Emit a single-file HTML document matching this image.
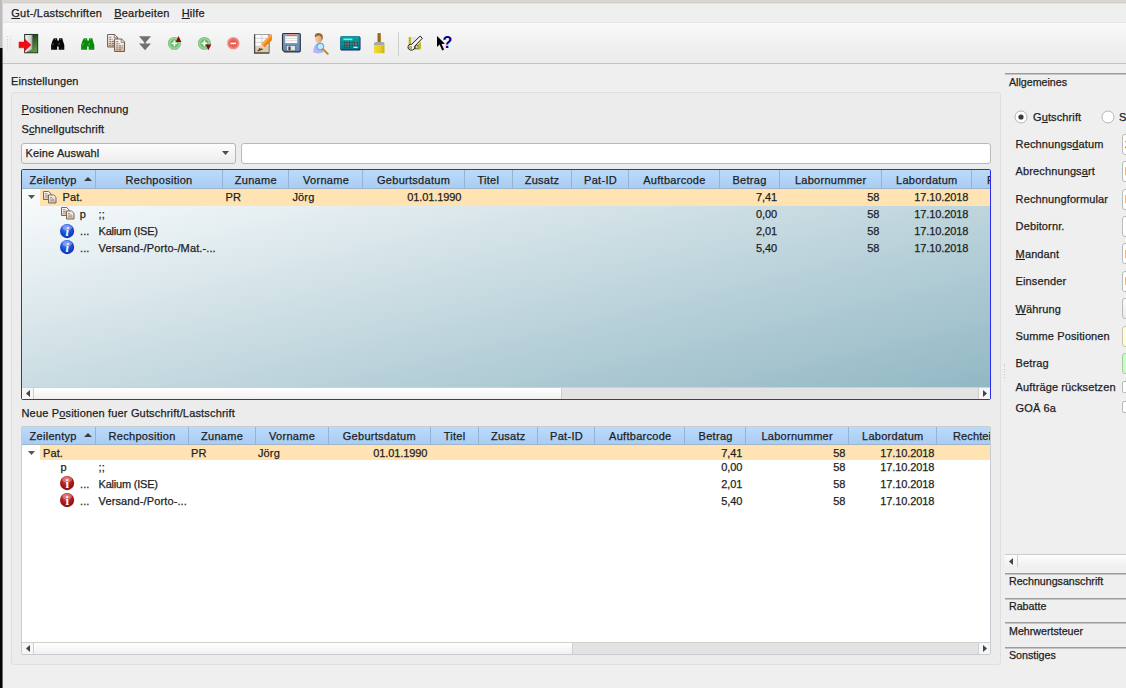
<!DOCTYPE html><html lang="de"><head><meta charset="utf-8"><title>Gut-/Lastschriften</title><style>
html,body{margin:0;padding:0;}
body{width:1126px;height:688px;overflow:hidden;background:#efefef;position:relative;font-family:"Liberation Sans",sans-serif;font-size:11px;color:#232323;}
.t{position:absolute;white-space:pre;line-height:12px;font-size:11px;letter-spacing:0.12px;color:#1e1e1e;-webkit-text-stroke:0.25px #1e1e1e;}
.t.n{letter-spacing:-0.1px;}
.t.h{letter-spacing:0.28px;}
.t.m{letter-spacing:0.22px;}
.t.k{letter-spacing:-0.22px;}
.t.a{font-size:10.67px;letter-spacing:0;color:#1c1c1c;}
u{text-decoration:underline;text-underline-offset:1px;text-decoration-thickness:1px;}
.abs{position:absolute;}
.field{position:absolute;box-sizing:border-box;border:1px solid #b9b9b9;border-radius:3px;background:#fff;}
.hdr{position:absolute;box-sizing:border-box;background:linear-gradient(#bbdbfb,#a9ccf2);border-bottom:1px solid #a0b4c8;}
.sep{position:absolute;width:1px;background:#96b4d6;}
.sel{position:absolute;background:#ffe3b3;}
.tabline{position:absolute;left:1005px;width:121px;height:2px;background:linear-gradient(#9c9c9c 0,#9c9c9c 50%,#c4c4c4 50%,#c4c4c4 100%);}
</style></head><body><div class="" style="position:absolute;left:0px;top:0px;width:1126px;height:3px;background:#d9d6d2;"></div><div class="" style="position:absolute;left:0px;top:2px;width:1126px;height:1px;background:#d2cfcb;"></div><div class="" style="position:absolute;left:0px;top:3px;width:1126px;height:1px;background:#e4e3e1;"></div><div class="" style="position:absolute;left:0px;top:0px;width:2px;height:48px;background:#bcbcbc;"></div><div class="" style="position:absolute;left:2px;top:0px;width:1px;height:48px;background:#d4d4d4;"></div><div class="" style="position:absolute;left:0px;top:48px;width:2px;height:640px;background:#060606;"></div><div class="" style="position:absolute;left:2px;top:48px;width:1px;height:640px;background:#6c6c6c;"></div><div class="t m" style="top:7.20px;left:11.30px;"><u>G</u>ut-/Lastschriften</div><div class="t m" style="top:7.20px;left:114.20px;"><u>B</u>earbeiten</div><div class="t m" style="top:7.20px;left:181.70px;"><u>H</u>ilfe</div><div class="" style="position:absolute;left:3px;top:22px;width:1123px;height:1px;background:#e6e6e6;"></div><div class="" style="position:absolute;left:3px;top:23px;width:1123px;height:40px;background:linear-gradient(#fafafa,#f2f2f2 40%,#ececec);"></div><div class="" style="position:absolute;left:3px;top:63px;width:1123px;height:1px;background:#c3c3c3;"></div><div class="abs" style="left:7px;top:36.0px;width:1px;height:1px;background:#cfcfcf"></div><div class="abs" style="left:10px;top:36.0px;width:1px;height:1px;background:#dcdcdc"></div><div class="abs" style="left:7px;top:38.5px;width:1px;height:1px;background:#cfcfcf"></div><div class="abs" style="left:10px;top:38.5px;width:1px;height:1px;background:#dcdcdc"></div><div class="abs" style="left:7px;top:41.0px;width:1px;height:1px;background:#cfcfcf"></div><div class="abs" style="left:10px;top:41.0px;width:1px;height:1px;background:#dcdcdc"></div><div class="abs" style="left:7px;top:43.5px;width:1px;height:1px;background:#cfcfcf"></div><div class="abs" style="left:10px;top:43.5px;width:1px;height:1px;background:#dcdcdc"></div><div class="abs" style="left:7px;top:46.0px;width:1px;height:1px;background:#cfcfcf"></div><div class="abs" style="left:10px;top:46.0px;width:1px;height:1px;background:#dcdcdc"></div><div class="abs" style="left:7px;top:48.5px;width:1px;height:1px;background:#cfcfcf"></div><div class="abs" style="left:10px;top:48.5px;width:1px;height:1px;background:#dcdcdc"></div><svg width="0" height="0" style="position:absolute"><defs>
<linearGradient id="gdoor" x1="0" y1="0" x2="0.4" y2="1"><stop offset="0" stop-color="#12300e"/><stop offset="0.45" stop-color="#2c5a22"/><stop offset="1" stop-color="#5c9442"/></linearGradient>
<linearGradient id="gleaf" x1="0" y1="0" x2="1" y2="0"><stop offset="0" stop-color="#f4f4f4"/><stop offset="0.7" stop-color="#cfcfcf"/><stop offset="1" stop-color="#9a9a9a"/></linearGradient>
<linearGradient id="gdoc" x1="0" y1="0" x2="0.3" y2="1"><stop offset="0" stop-color="#ffffff"/><stop offset="0.55" stop-color="#f6ece4"/><stop offset="1" stop-color="#e6bf9c"/></linearGradient>
<radialGradient id="ggreen" cx="0.5" cy="0.5" r="0.5"><stop offset="0" stop-color="#4cae50"/><stop offset="0.55" stop-color="#62b866"/><stop offset="0.72" stop-color="#a4d6a5"/><stop offset="0.9" stop-color="#86c688"/><stop offset="1" stop-color="#66b06a"/></radialGradient>
<radialGradient id="gred" cx="0.5" cy="0.5" r="0.5"><stop offset="0" stop-color="#e2493f"/><stop offset="0.6" stop-color="#ea665c"/><stop offset="1" stop-color="#f2a59e"/></radialGradient>
<linearGradient id="gfloppy" x1="0" y1="0" x2="0" y2="1"><stop offset="0" stop-color="#7ba3c9"/><stop offset="1" stop-color="#5f87b0"/></linearGradient>
<linearGradient id="gpencil" x1="0" y1="0" x2="1" y2="1"><stop offset="0" stop-color="#ffb050"/><stop offset="0.5" stop-color="#ff8a10"/><stop offset="1" stop-color="#e06800"/></linearGradient>
<linearGradient id="gbrist" x1="0" y1="0" x2="1" y2="0"><stop offset="0" stop-color="#f0dc38"/><stop offset="0.6" stop-color="#e6cc20"/><stop offset="1" stop-color="#cdb218"/></linearGradient>
<radialGradient id="gblue" cx="0.45" cy="0.3" r="0.75"><stop offset="0" stop-color="#5c8cff"/><stop offset="0.5" stop-color="#1d4fe0"/><stop offset="1" stop-color="#0a2aa8"/></radialGradient>
<radialGradient id="gdred" cx="0.45" cy="0.3" r="0.75"><stop offset="0" stop-color="#e05a5a"/><stop offset="0.5" stop-color="#b01c1c"/><stop offset="1" stop-color="#7a0c0c"/></radialGradient>
<linearGradient id="gteal" x1="0" y1="0" x2="0" y2="1"><stop offset="0" stop-color="#10a0a0"/><stop offset="1" stop-color="#007e86"/></linearGradient>
<linearGradient id="gface" x1="0" y1="0" x2="1" y2="0"><stop offset="0" stop-color="#f6cfae"/><stop offset="1" stop-color="#e0a07a"/></linearGradient>
</defs></svg><svg class="abs" style="left:18.8px;top:33.8px;overflow:visible" width="20" height="19.5" viewBox="0 0 20 19.5" ><rect x="5.7" y="0.4" width="13" height="18.4" fill="url(#gdoor)" stroke="#1c2a1c" stroke-width="0.9"/><path d="M6.2 0.9h7.3v14.2l-7.3 3.4z" fill="url(#gleaf)"/><path d="M13.5 0.9v14.2" stroke="#6a6a6a" stroke-width="0.6"/><path d="M0 8h5.6V4.9l6.4 6l-6.4 6V13.8H0z" fill="#f20c12" stroke="#d80008" stroke-width="0.5"/></svg><svg class="abs" style="left:50.9px;top:38.1px;overflow:visible" width="13.4" height="12" viewBox="0 0 13.4 12" ><path d="M2.9 0.2h3.1l0.5 2.6h1.2l0.5-2.6h3.1l0.7 2.8l1.3 4v4.8h-5.6v-3.3h-1.6v3.3H0.1v-4.8l1.3-4z" fill="#060606"/><path d="M3.9 1.2h1.1M8.8 1.2h1.1" stroke="#fff" stroke-width="0.9" opacity="0.55"/><path d="M2.3 5.2l-0.5 2.2M8.2 5.2l-0.3 2" stroke="#fff" stroke-width="0.9" opacity="0.4"/><path d="M1.6 10.2h0.8M10.4 10.2h0.8" stroke="#fff" stroke-width="0.8" opacity="0.35"/></svg><svg class="abs" style="left:80.6px;top:38.1px;overflow:visible" width="13.4" height="12" viewBox="0 0 13.4 12" ><path d="M2.9 0.2h3.1l0.5 2.6h1.2l0.5-2.6h3.1l0.7 2.8l1.3 4v4.8h-5.6v-3.3h-1.6v3.3H0.1v-4.8l1.3-4z" fill="#0a8a0a"/><path d="M3.9 1.2h1.1M8.8 1.2h1.1" stroke="#fff" stroke-width="0.9" opacity="0.55"/><path d="M2.3 5.2l-0.5 2.2M8.2 5.2l-0.3 2" stroke="#fff" stroke-width="0.9" opacity="0.4"/><path d="M1.6 10.2h0.8M10.4 10.2h0.8" stroke="#fff" stroke-width="0.8" opacity="0.35"/></svg><svg class="abs" style="left:107px;top:34.2px;overflow:visible" width="18.5" height="19" viewBox="0 0 18.5 19" ><g transform="translate(0,0)"><path d="M0.6 1.2q0-0.7 0.7-0.7h6l3.2 3.2v8.6q0 0.7-0.7 0.7h-8.5q-0.7 0-0.7-0.7z" fill="url(#gdoc)" stroke="#6f6056" stroke-width="1.1"/><path d="M7.2 0.7v3.1h3.1" fill="#fff" stroke="#6f6056" stroke-width="0.8"/><path d="M2.2 3.2h2.8M2.2 5.3h3.4M2.2 7.4h6.6M2.2 9.4h6.6M2.2 11.3h5" stroke="#6b625c" stroke-width="0.9" stroke-dasharray="2.2 0.6"/></g><g transform="translate(7,4.5)"><path d="M0.6 1.2q0-0.7 0.7-0.7h6l3.2 3.2v8.6q0 0.7-0.7 0.7h-8.5q-0.7 0-0.7-0.7z" fill="url(#gdoc)" stroke="#6f6056" stroke-width="1.1"/><path d="M7.2 0.7v3.1h3.1" fill="#fff" stroke="#6f6056" stroke-width="0.8"/><path d="M2.2 3.2h2.8M2.2 5.3h3.4M2.2 7.4h6.6M2.2 9.4h6.6M2.2 11.3h5" stroke="#6b625c" stroke-width="0.9" stroke-dasharray="2.2 0.6"/></g></svg><svg class="abs" style="left:139px;top:36px;overflow:visible" width="12" height="14.5" viewBox="0 0 12 14.5" ><path d="M0 0.2h12L6 7.2z M0 7.4h12L6 14.3z" fill="#737073"/><path d="M5.4 6h1.2v2H5.4z" fill="#737073"/></svg><svg class="abs" style="left:168.2px;top:37px;overflow:visible" width="12.8" height="12.8" viewBox="0 0 12.8 12.8" ><circle cx="6.4" cy="6.4" r="6.4" fill="url(#ggreen)"/><path d="M6.4 3.6v5.6M3.6 6.4h5.6" stroke="#fff" stroke-width="1.7"/><path d="M10.5 -1.1L13.4 5.1H7.7z" fill="#8c0a0e"/></svg><svg class="abs" style="left:197.6px;top:37px;overflow:visible" width="12.8" height="12.8" viewBox="0 0 12.8 12.8" ><circle cx="6.4" cy="6.4" r="6.4" fill="url(#ggreen)"/><path d="M6.4 3.6v5.6M3.6 6.4h5.6" stroke="#fff" stroke-width="1.7"/><path d="M7.4 7.4h5.9L10.4 13.3z" fill="#8c0a0e"/></svg><svg class="abs" style="left:227px;top:37px;overflow:visible" width="12.6" height="12.6" viewBox="0 0 12.6 12.6" ><circle cx="6.3" cy="6.3" r="6.3" fill="url(#gred)"/><path d="M3.6 6.4h5.4" stroke="#fff" stroke-width="1.6"/></svg><svg class="abs" style="left:254.2px;top:33.5px;overflow:visible" width="19" height="19.5" viewBox="0 0 19 19.5" ><rect x="0.5" y="0.4" width="14.6" height="18.4" fill="#fbfbfb" stroke="#8c8c8c" stroke-width="0.8"/><path d="M0.5 12.2h14.6v6.6H0.5z" fill="#e2cda8"/><path d="M0.6 4.4h14.4M0.6 8.3h14.4M0.6 12.2h14.4M0.6 15.6h14.4M7.8 0.5v18" stroke="#c9c9c9" stroke-width="0.8"/><path d="M0.6 0.4v18.6h14.6" fill="none" stroke="#4a4a4a" stroke-width="1.3"/><path d="M15.1 0.4v18.4" stroke="#777" stroke-width="0.9"/><path d="M17.9 0l-1.4 0.6l-9.3 9.4l3.4 3.6L17.9 6.2z" fill="url(#gpencil)"/><path d="M17.9 0.4l-9.6 10.4" stroke="#ffd09a" stroke-width="0.8" fill="none"/><path d="M7.2 10l-2.6 5.8l6-2.2z" fill="#f6cdb0"/><path d="M4.6 15.8l2.2-0.8l-1.3-1.3z" fill="#2e2418"/><path d="M3.6 16.9l5-2" stroke="#4a3c28" stroke-width="1.3"/></svg><svg class="abs" style="left:282px;top:33.2px;overflow:visible" width="19" height="19.5" viewBox="0 0 19 19.5" ><path d="M1.6 0.5h15.6q1.1 0 1.1 1.1v16.2q0 1.1-1.1 1.1H2.6L0.5 16.8V1.6q0-1.1 1.1-1.1z" fill="url(#gfloppy)" stroke="#28313c" stroke-width="1.1"/><rect x="3.2" y="1.5" width="12" height="8.6" fill="#fcfcfc"/><rect x="3.2" y="1.5" width="12" height="1.7" fill="#e26a6a"/><path d="M3.2 5.4h12M3.2 7.6h12" stroke="#cfcfcf" stroke-width="0.7"/><rect x="4.4" y="12.6" width="9" height="5.2" fill="#e4e4e4" stroke="#48505a" stroke-width="0.5"/><rect x="6.4" y="13.5" width="2.2" height="3.6" fill="#3a3a3a"/></svg><svg class="abs" style="left:313px;top:32.6px;overflow:visible" width="16" height="21.5" viewBox="0 0 16 21.5" ><path d="M0.2 19.6q-0.3-7.8 5-9.6q5.3 1.6 5 9.6q-5 1.6-10 0z" fill="#b4b6f6"/><ellipse cx="5.6" cy="5.4" rx="3.5" ry="4.5" fill="url(#gface)"/><path d="M1.8 4.4q-0.6-4.4 4-4.4q4.6 0.2 4 5.2q-0.6 2-1.2 2.6q0.4-3.4-1.6-5.2q-3 0.2-5.2 1.8z" fill="#9a6826"/><circle cx="7.3" cy="13.6" r="3.3" fill="#cfeaff" stroke="#3bb4e6" stroke-width="1.2" opacity="0.95"/><path d="M9.9 16.3l4.8 4.4" stroke="#c98a1c" stroke-width="2" stroke-linecap="round"/></svg><svg class="abs" style="left:340.2px;top:35.6px;overflow:visible" width="21" height="15" viewBox="0 0 21 15" ><rect x="0.3" y="0.3" width="20.2" height="14.2" rx="1.6" fill="#12186c"/><rect x="0.3" y="0.3" width="19.4" height="13.2" rx="1.4" fill="url(#gteal)"/><rect x="3.4" y="2.5" width="9" height="1.7" fill="#66f2f2"/><rect x="3.1" y="5.6" width="1.5" height="1.5" fill="#2a2a34"/><rect x="3.1" y="5.6" width="0.8" height="0.8" fill="#b8b8b8"/><rect x="5.7" y="5.6" width="1.5" height="1.5" fill="#2a2a34"/><rect x="5.7" y="5.6" width="0.8" height="0.8" fill="#b8b8b8"/><rect x="8.3" y="5.6" width="1.5" height="1.5" fill="#2a2a34"/><rect x="8.3" y="5.6" width="0.8" height="0.8" fill="#b8b8b8"/><rect x="10.9" y="5.6" width="1.5" height="1.5" fill="#2a2a34"/><rect x="10.9" y="5.6" width="0.8" height="0.8" fill="#b8b8b8"/><rect x="13.5" y="5.6" width="1.5" height="1.5" fill="#2a2a34"/><rect x="13.5" y="5.6" width="0.8" height="0.8" fill="#b8b8b8"/><rect x="16.1" y="5.6" width="1.5" height="1.5" fill="#2a2a34"/><rect x="16.1" y="5.6" width="0.8" height="0.8" fill="#b8b8b8"/><rect x="3.1" y="8.1" width="1.5" height="1.5" fill="#2a2a34"/><rect x="3.1" y="8.1" width="0.8" height="0.8" fill="#b8b8b8"/><rect x="5.7" y="8.1" width="1.5" height="1.5" fill="#2a2a34"/><rect x="5.7" y="8.1" width="0.8" height="0.8" fill="#b8b8b8"/><rect x="8.3" y="8.1" width="1.5" height="1.5" fill="#2a2a34"/><rect x="8.3" y="8.1" width="0.8" height="0.8" fill="#b8b8b8"/><rect x="10.9" y="8.1" width="1.5" height="1.5" fill="#2a2a34"/><rect x="10.9" y="8.1" width="0.8" height="0.8" fill="#b8b8b8"/><rect x="13.5" y="8.1" width="1.5" height="1.5" fill="#2a2a34"/><rect x="13.5" y="8.1" width="0.8" height="0.8" fill="#b8b8b8"/><rect x="16.1" y="8.1" width="1.5" height="1.5" fill="#2a2a34"/><rect x="16.1" y="8.1" width="0.8" height="0.8" fill="#b8b8b8"/><rect x="3.1" y="10.6" width="1.5" height="1.5" fill="#2a2a34"/><rect x="3.1" y="10.6" width="0.8" height="0.8" fill="#b8b8b8"/><rect x="5.7" y="10.6" width="1.5" height="1.5" fill="#2a2a34"/><rect x="5.7" y="10.6" width="0.8" height="0.8" fill="#b8b8b8"/><rect x="8.3" y="10.6" width="1.5" height="1.5" fill="#2a2a34"/><rect x="8.3" y="10.6" width="0.8" height="0.8" fill="#b8b8b8"/><rect x="10.9" y="10.6" width="1.5" height="1.5" fill="#2a2a34"/><rect x="10.9" y="10.6" width="0.8" height="0.8" fill="#b8b8b8"/><rect x="13.5" y="10.7" width="4" height="1.3" fill="#e8e8e8"/></svg><svg class="abs" style="left:374.3px;top:33px;overflow:visible" width="10.5" height="20.5" viewBox="0 0 10.5 20.5" ><rect x="3.5" y="0" width="3.3" height="9.6" rx="0.8" fill="#9c6a18"/><path d="M0 12.6v-1.6q0-2 2-2h6.5q2 0 2 2v1.6z" fill="#a6a6a6"/><rect x="0" y="12.4" width="10.5" height="7.8" rx="0.6" fill="url(#gbrist)"/></svg><svg class="abs" style="left:408px;top:36px;overflow:visible" width="14.5" height="14.5" viewBox="0 0 14.5 14.5" ><rect x="0.8" y="1" width="12.2" height="12.6" fill="#e3e3e3"/><path d="M13 5.6v8H5z" fill="#cfc62a"/><rect x="0.8" y="1" width="2.2" height="12.6" fill="#c9c024"/><path d="M0.8 2.6h1.6M0.8 4.4h1.6M0.8 6.2h1.6M0.8 8h1.6M11.4 8.2h1.6M11.4 10h1.6M11.4 11.8h1.6" stroke="#8a8410" stroke-width="0.5"/><rect x="7.6" y="9.2" width="2.4" height="3.6" fill="#d6d6d6" stroke="#444" stroke-width="0.6"/><path d="M12.2 0.1l2.1 2.2l-7.9 8.2q0.7 1.2-0.2 2.4q-1.4 1.6-3.6 1.2l-2.4-1.6q-0.6-2 0.6-3.4q1.3-1.2 3-0.8z" fill="#fbfbfb" stroke="#161616" stroke-width="1" stroke-linejoin="round"/><circle cx="2.6" cy="11.5" r="1.2" fill="#d6cc1c" stroke="#5a5600" stroke-width="0.4"/></svg><svg class="abs" style="left:437px;top:36px;overflow:visible" width="16" height="15" viewBox="0 0 16 15" ><path d="M0 0v10.9l2.6-2.4l2.6 5.9l1.9-0.9l-2.6-5.6l3.4-0.2z" fill="#000"/><text x="5.6" y="11.6" font-family="'Liberation Sans',sans-serif" font-size="16" font-weight="bold" fill="#00008c">?</text></svg><div class="" style="position:absolute;left:398px;top:32px;width:1px;height:24px;background:#cfcfcf;"></div><div class="t " style="top:75.20px;left:11.00px;">Einstellungen</div><div class="" style="position:absolute;left:11px;top:92px;width:990px;height:573px;box-sizing:border-box;border:1px solid #dfdfdf;border-radius:3px;background:#ececec;"></div><div class="t " style="top:102.70px;left:21.50px;"><u>P</u>ositionen Rechnung</div><div class="t " style="top:123.20px;left:21.50px;">S<u>c</u>hnellgutschrift</div><div class="" style="position:absolute;left:21px;top:142.5px;width:214.5px;height:21px;box-sizing:border-box;border:1px solid #b6b6b6;border-radius:3px;background:linear-gradient(#fdfdfd,#ececec);"></div><div class="t " style="top:146.80px;left:25.60px;">Keine Auswahl</div><svg class="abs" style="left:222px;top:151px" width="7" height="4" viewBox="0 0 7 4"><path d="M0 0h7L3.5 4z" fill="#4c4c4c"/></svg><div class="field" style="position:absolute;left:241px;top:142.5px;width:750px;height:21px;"></div><div class="" style="position:absolute;left:21px;top:169px;width:970px;height:231px;box-sizing:border-box;border:1px solid #2b2bf0;border-radius:2px;background:linear-gradient(to bottom right,#ffffff,#8fb6c3);overflow:hidden;"></div><div class="hdr" style="position:absolute;left:22px;top:170px;width:968px;height:19px;"></div><div class="" style="position:absolute;left:95px;top:170px;width:1px;height:18px;background:#93b2d8;"></div><div class="" style="position:absolute;left:222px;top:170px;width:1px;height:18px;background:#93b2d8;"></div><div class="" style="position:absolute;left:288px;top:170px;width:1px;height:18px;background:#93b2d8;"></div><div class="" style="position:absolute;left:362px;top:170px;width:1px;height:18px;background:#93b2d8;"></div><div class="" style="position:absolute;left:464px;top:170px;width:1px;height:18px;background:#93b2d8;"></div><div class="" style="position:absolute;left:512px;top:170px;width:1px;height:18px;background:#93b2d8;"></div><div class="" style="position:absolute;left:571px;top:170px;width:1px;height:18px;background:#93b2d8;"></div><div class="" style="position:absolute;left:628px;top:170px;width:1px;height:18px;background:#93b2d8;"></div><div class="" style="position:absolute;left:719px;top:170px;width:1px;height:18px;background:#93b2d8;"></div><div class="" style="position:absolute;left:779px;top:170px;width:1px;height:18px;background:#93b2d8;"></div><div class="" style="position:absolute;left:881px;top:170px;width:1px;height:18px;background:#93b2d8;"></div><div class="" style="position:absolute;left:971px;top:170px;width:1px;height:18px;background:#93b2d8;"></div><div class="t h" style="top:173.70px;left:29.60px;">Zeilentyp</div><div class="t h" style="top:173.70px;left:9.05px;width:300px;text-align:center;">Rechposition</div><div class="t h" style="top:173.70px;left:105.80px;width:300px;text-align:center;">Zuname</div><div class="t h" style="top:173.70px;left:176.05px;width:300px;text-align:center;">Vorname</div><div class="t h" style="top:173.70px;left:263.55px;width:300px;text-align:center;">Geburtsdatum</div><div class="t h" style="top:173.70px;left:338.30px;width:300px;text-align:center;">Titel</div><div class="t h" style="top:173.70px;left:392.05px;width:300px;text-align:center;">Zusatz</div><div class="t h" style="top:173.70px;left:450.55px;width:300px;text-align:center;">Pat-ID</div><div class="t h" style="top:173.70px;left:524.42px;width:300px;text-align:center;">Auftbarcode</div><div class="t h" style="top:173.70px;left:599.55px;width:300px;text-align:center;">Betrag</div><div class="t h" style="top:173.70px;left:680.67px;width:300px;text-align:center;">Labornummer</div><div class="t h" style="top:173.70px;left:776.80px;width:300px;text-align:center;">Labordatum</div><div class="abs" style="left:972px;top:170px;width:18px;height:19px;overflow:hidden"><div class="t" style="left:15px;top:3.70px">Rechteigent.</div></div><svg class="abs" style="left:84px;top:176.5px" width="8" height="4" viewBox="0 0 8 4"><path d="M0 4L4 0L8 4z" fill="#3c3c3c"/></svg><div class="sel" style="position:absolute;left:40px;top:189px;width:950px;height:16.5px;"></div><svg class="abs" style="left:28px;top:195px" width="7" height="4" viewBox="0 0 7 4"><path d="M0 0h7L3.5 4z" fill="#555"/></svg><svg class="abs" style="left:43px;top:190.6px;overflow:visible" width="13.5" height="12.5" viewBox="0 0 13.5 12.5" ><path d="M0.5 0.5h5.2l2.3 2.3v5.7h-7.5z" fill="url(#gdoc)" stroke="#77685c" stroke-width="1"/><path d="M1.8 2.6h2.6M1.8 4.3h4.4M1.8 6h4.4" stroke="#8a8078" stroke-width="0.8"/><path d="M5.5 4h5.2l2.3 2.3v5.7h-7.5z" fill="url(#gdoc)" stroke="#77685c" stroke-width="1"/><path d="M6.8 6.4h2.6M6.8 8.1h4.4M6.8 9.8h4.4" stroke="#8a8078" stroke-width="0.8"/></svg><svg class="abs" style="left:61px;top:207.3px;overflow:visible" width="13.5" height="12.5" viewBox="0 0 13.5 12.5" ><path d="M0.5 0.5h5.2l2.3 2.3v5.7h-7.5z" fill="url(#gdoc)" stroke="#77685c" stroke-width="1"/><path d="M1.8 2.6h2.6M1.8 4.3h4.4M1.8 6h4.4" stroke="#8a8078" stroke-width="0.8"/><path d="M5.5 4h5.2l2.3 2.3v5.7h-7.5z" fill="url(#gdoc)" stroke="#77685c" stroke-width="1"/><path d="M6.8 6.4h2.6M6.8 8.1h4.4M6.8 9.8h4.4" stroke="#8a8078" stroke-width="0.8"/></svg><svg class="abs" style="left:60.1px;top:223.6px;overflow:visible" width="14.2" height="14.2" viewBox="0 0 14.2 14.2" ><circle cx="7.1" cy="7.1" r="7.1" fill="url(#gblue)"/><ellipse cx="7.1" cy="3.6" rx="4.8" ry="2.8" fill="#fff" opacity="0.3"/><text x="7.2" y="11.6" font-family="'Liberation Serif',serif" font-size="12.5" font-weight="bold" font-style="italic" fill="#fff" text-anchor="middle">i</text></svg><svg class="abs" style="left:60.1px;top:240.4px;overflow:visible" width="14.2" height="14.2" viewBox="0 0 14.2 14.2" ><circle cx="7.1" cy="7.1" r="7.1" fill="url(#gblue)"/><ellipse cx="7.1" cy="3.6" rx="4.8" ry="2.8" fill="#fff" opacity="0.3"/><text x="7.2" y="11.6" font-family="'Liberation Serif',serif" font-size="12.5" font-weight="bold" font-style="italic" fill="#fff" text-anchor="middle">i</text></svg><div class="t " style="top:191.20px;left:62.50px;">Pat.</div><div class="t " style="top:191.20px;left:225.50px;">PR</div><div class="t " style="top:191.20px;left:292.50px;">Jörg</div><div class="t n" style="top:191.20px;right:664.70px;">01.01.1990</div><div class="t n" style="top:191.20px;right:349.00px;">7,41</div><div class="t n" style="top:191.20px;right:246.80px;">58</div><div class="t n" style="top:191.20px;right:157.70px;">17.10.2018</div><div class="t n" style="top:207.90px;right:349.00px;">0,00</div><div class="t n" style="top:207.90px;right:246.80px;">58</div><div class="t n" style="top:207.90px;right:157.70px;">17.10.2018</div><div class="t n" style="top:224.70px;right:349.00px;">2,01</div><div class="t n" style="top:224.70px;right:246.80px;">58</div><div class="t n" style="top:224.70px;right:157.70px;">17.10.2018</div><div class="t n" style="top:241.70px;right:349.00px;">5,40</div><div class="t n" style="top:241.70px;right:246.80px;">58</div><div class="t n" style="top:241.70px;right:157.70px;">17.10.2018</div><div class="t " style="top:207.90px;left:79.80px;">p</div><div class="t " style="top:207.90px;left:98.60px;">;;</div><div class="t " style="top:224.70px;left:80.00px;">...</div><div class="t k" style="top:224.70px;left:98.60px;">Kalium (ISE)</div><div class="t " style="top:241.70px;left:80.00px;">...</div><div class="t " style="top:241.70px;left:98.60px;">Versand-/Porto-/Mat.-...</div><div class="" style="position:absolute;left:22px;top:387px;width:968px;height:12px;background:#e3e3e3;border-top:1px solid #c9d3d6;box-sizing:border-box;"></div><div class="" style="position:absolute;left:22px;top:387px;width:12px;height:12px;background:#f6f6f6;border-right:1px solid #cfcfcf;border-top:1px solid #c9d3d6;box-sizing:border-box;"></div><div class="" style="position:absolute;left:34px;top:387px;width:528px;height:12px;background:linear-gradient(#ffffff,#f0f0f0);border-right:1px solid #cfcfcf;border-top:1px solid #c9d3d6;box-sizing:border-box;"></div><div class="" style="position:absolute;left:978px;top:387px;width:12px;height:12px;background:#f6f6f6;border-left:1px solid #cfcfcf;border-top:1px solid #c9d3d6;box-sizing:border-box;"></div><svg class="abs" style="left:26px;top:390px" width="4" height="7" viewBox="0 0 4 7"><path d="M4 0v7L0 3.5z" fill="#444"/></svg><svg class="abs" style="left:982.5px;top:390px" width="4" height="7" viewBox="0 0 4 7"><path d="M0 0v7L4 3.5z" fill="#444"/></svg><div class="t " style="top:407.20px;left:21.50px;letter-spacing:0.17px;">Neue P<u>o</u>sitionen fuer Gutschrift/Lastschrift</div><div class="" style="position:absolute;left:21px;top:426px;width:970px;height:229px;box-sizing:border-box;border:1px solid #c6ccd2;border-radius:2px;background:#fff;overflow:hidden;"></div><div class="hdr" style="position:absolute;left:22px;top:427px;width:968px;height:18px;"></div><div class="" style="position:absolute;left:95px;top:427px;width:1px;height:17px;background:#93b2d8;"></div><div class="" style="position:absolute;left:188px;top:427px;width:1px;height:17px;background:#93b2d8;"></div><div class="" style="position:absolute;left:255px;top:427px;width:1px;height:17px;background:#93b2d8;"></div><div class="" style="position:absolute;left:328px;top:427px;width:1px;height:17px;background:#93b2d8;"></div><div class="" style="position:absolute;left:430px;top:427px;width:1px;height:17px;background:#93b2d8;"></div><div class="" style="position:absolute;left:478px;top:427px;width:1px;height:17px;background:#93b2d8;"></div><div class="" style="position:absolute;left:537px;top:427px;width:1px;height:17px;background:#93b2d8;"></div><div class="" style="position:absolute;left:594px;top:427px;width:1px;height:17px;background:#93b2d8;"></div><div class="" style="position:absolute;left:684px;top:427px;width:1px;height:17px;background:#93b2d8;"></div><div class="" style="position:absolute;left:745px;top:427px;width:1px;height:17px;background:#93b2d8;"></div><div class="" style="position:absolute;left:848px;top:427px;width:1px;height:17px;background:#93b2d8;"></div><div class="" style="position:absolute;left:936px;top:427px;width:1px;height:17px;background:#93b2d8;"></div><div class="t h" style="top:429.70px;left:29.60px;">Zeilentyp</div><div class="t h" style="top:429.70px;left:-7.95px;width:300px;text-align:center;">Rechposition</div><div class="t h" style="top:429.70px;left:72.05px;width:300px;text-align:center;">Zuname</div><div class="t h" style="top:429.70px;left:142.05px;width:300px;text-align:center;">Vorname</div><div class="t h" style="top:429.70px;left:229.30px;width:300px;text-align:center;">Geburtsdatum</div><div class="t h" style="top:429.70px;left:304.55px;width:300px;text-align:center;">Titel</div><div class="t h" style="top:429.70px;left:358.30px;width:300px;text-align:center;">Zusatz</div><div class="t h" style="top:429.70px;left:416.55px;width:300px;text-align:center;">Pat-ID</div><div class="t h" style="top:429.70px;left:490.30px;width:300px;text-align:center;">Auftbarcode</div><div class="t h" style="top:429.70px;left:565.67px;width:300px;text-align:center;">Betrag</div><div class="t h" style="top:429.70px;left:647.17px;width:300px;text-align:center;">Labornummer</div><div class="t h" style="top:429.70px;left:742.80px;width:300px;text-align:center;">Labordatum</div><div class="abs" style="left:938px;top:427px;width:52px;height:18px;overflow:hidden"><div class="t" style="left:15px;top:2.70px">Rechteigent.</div></div><svg class="abs" style="left:84px;top:433px" width="8" height="4" viewBox="0 0 8 4"><path d="M0 4L4 0L8 4z" fill="#3c3c3c"/></svg><div class="sel" style="position:absolute;left:40px;top:444.5px;width:950px;height:15.3px;"></div><svg class="abs" style="left:28px;top:451px" width="7" height="4" viewBox="0 0 7 4"><path d="M0 0h7L3.5 4z" fill="#555"/></svg><div class="t " style="top:446.50px;left:43.00px;">Pat.</div><div class="t " style="top:446.50px;left:191.00px;">PR</div><div class="t " style="top:446.50px;left:258.00px;">Jörg</div><div class="t n" style="top:446.50px;right:698.70px;">01.01.1990</div><div class="t n" style="top:446.50px;right:383.70px;">7,41</div><div class="t n" style="top:446.50px;right:280.70px;">58</div><div class="t n" style="top:446.50px;right:191.70px;">17.10.2018</div><div class="t n" style="top:461.10px;right:383.70px;">0,00</div><div class="t n" style="top:461.10px;right:280.70px;">58</div><div class="t n" style="top:461.10px;right:191.70px;">17.10.2018</div><div class="t n" style="top:477.70px;right:383.70px;">2,01</div><div class="t n" style="top:477.70px;right:280.70px;">58</div><div class="t n" style="top:477.70px;right:191.70px;">17.10.2018</div><div class="t n" style="top:494.60px;right:383.70px;">5,40</div><div class="t n" style="top:494.60px;right:280.70px;">58</div><div class="t n" style="top:494.60px;right:191.70px;">17.10.2018</div><div class="t " style="top:461.10px;left:60.60px;">p</div><div class="t " style="top:461.10px;left:98.60px;">;;</div><div class="t " style="top:477.70px;left:80.00px;">...</div><div class="t k" style="top:477.70px;left:98.60px;">Kalium (ISE)</div><div class="t " style="top:494.60px;left:80.00px;">...</div><div class="t " style="top:494.60px;left:98.60px;">Versand-/Porto-...</div><svg class="abs" style="left:60.2px;top:476px;overflow:visible" width="14.2" height="14.2" viewBox="0 0 14.2 14.2" ><circle cx="7.1" cy="7.1" r="7.1" fill="url(#gdred)"/><ellipse cx="7.1" cy="3.6" rx="4.8" ry="2.8" fill="#fff" opacity="0.3"/><text x="7.3" y="11.6" font-family="'Liberation Serif',serif" font-size="12.5" font-weight="bold"  fill="#fff" text-anchor="middle">i</text></svg><svg class="abs" style="left:60.2px;top:492.9px;overflow:visible" width="14.2" height="14.2" viewBox="0 0 14.2 14.2" ><circle cx="7.1" cy="7.1" r="7.1" fill="url(#gdred)"/><ellipse cx="7.1" cy="3.6" rx="4.8" ry="2.8" fill="#fff" opacity="0.3"/><text x="7.3" y="11.6" font-family="'Liberation Serif',serif" font-size="12.5" font-weight="bold"  fill="#fff" text-anchor="middle">i</text></svg><div class="" style="position:absolute;left:22px;top:642px;width:968px;height:12px;background:#e3e3e3;border-top:1px solid #d0d0d0;box-sizing:border-box;"></div><div class="" style="position:absolute;left:22px;top:642px;width:12px;height:12px;background:#f6f6f6;border-right:1px solid #cfcfcf;border-top:1px solid #d0d0d0;box-sizing:border-box;"></div><div class="" style="position:absolute;left:34px;top:642px;width:539px;height:12px;background:linear-gradient(#ffffff,#f0f0f0);border-right:1px solid #cfcfcf;border-top:1px solid #d0d0d0;box-sizing:border-box;"></div><div class="" style="position:absolute;left:978px;top:642px;width:12px;height:12px;background:#f6f6f6;border-left:1px solid #cfcfcf;border-top:1px solid #d0d0d0;box-sizing:border-box;"></div><svg class="abs" style="left:26px;top:645px" width="4" height="7" viewBox="0 0 4 7"><path d="M4 0v7L0 3.5z" fill="#444"/></svg><svg class="abs" style="left:982.5px;top:645px" width="4" height="7" viewBox="0 0 4 7"><path d="M0 0v7L4 3.5z" fill="#444"/></svg><div class="" style="position:absolute;left:1003.5px;top:363.5px;width:1px;height:1px;background:#c4c4c4;"></div><div class="" style="position:absolute;left:1003.5px;top:366.1px;width:1px;height:1px;background:#c4c4c4;"></div><div class="" style="position:absolute;left:1003.5px;top:368.7px;width:1px;height:1px;background:#c4c4c4;"></div><div class="" style="position:absolute;left:1003.5px;top:371.3px;width:1px;height:1px;background:#c4c4c4;"></div><div class="" style="position:absolute;left:1003.5px;top:373.9px;width:1px;height:1px;background:#c4c4c4;"></div><div class="" style="position:absolute;left:1003.5px;top:376.5px;width:1px;height:1px;background:#c4c4c4;"></div><div class="tabline" style="top:73px"></div><div class="t a" style="top:76.20px;left:1009.00px;">Allgemeines</div><svg class="abs" style="left:1014px;top:110px" width="14" height="14" viewBox="0 0 14 14"><circle cx="7" cy="7" r="6" fill="#fff" stroke="#b4b4b4" stroke-width="1"/><circle cx="7" cy="7" r="2.6" fill="#3a3a3a"/></svg><svg class="abs" style="left:1101px;top:110px" width="14" height="14" viewBox="0 0 14 14"><circle cx="7" cy="7" r="6" fill="#fff" stroke="#b4b4b4" stroke-width="1"/></svg><div class="t " style="top:111.20px;left:1033.00px;">G<u>u</u>tschrift</div><div class="t " style="top:111.20px;left:1119.00px;">S</div><div class="t " style="top:137.70px;left:1015.60px;">Rechnungs<u>d</u>atum</div><div class="t " style="top:165.20px;left:1015.60px;">Abrechnungs<u>a</u>rt</div><div class="t " style="top:192.50px;left:1015.60px;">Rechnungformular</div><div class="t " style="top:220.40px;left:1015.60px;">Debitornr.</div><div class="t " style="top:247.90px;left:1015.60px;"><u>M</u>andant</div><div class="t " style="top:275.20px;left:1015.60px;">Einsender</div><div class="t " style="top:302.90px;left:1015.60px;"><u>W</u>ährung</div><div class="t " style="top:330.20px;left:1015.60px;">Summe Positionen</div><div class="t " style="top:357.20px;left:1015.60px;">Betrag</div><div class="t " style="top:381.40px;left:1015.60px;">Aufträge rücksetzen</div><div class="t " style="top:401.70px;left:1015.60px;">GOÄ 6a</div><div class="field" style="position:absolute;left:1122px;top:133.7px;width:20px;height:21px;"></div><div class="field" style="position:absolute;left:1122px;top:161px;width:20px;height:21px;"></div><div class="field" style="position:absolute;left:1122px;top:188.5px;width:20px;height:21px;"></div><div class="field" style="position:absolute;left:1122px;top:215.8px;width:20px;height:21px;"></div><div class="field" style="position:absolute;left:1122px;top:243.3px;width:20px;height:21px;"></div><div class="field" style="position:absolute;left:1122px;top:270.6px;width:20px;height:21px;"></div><div class="field" style="position:absolute;left:1122px;top:298px;width:20px;height:21px;background:linear-gradient(#fcfcfc,#eaeaea);"></div><div class="field" style="position:absolute;left:1122px;top:325.5px;width:20px;height:21px;background:#ffffd4;border-color:#c4c4b0;"></div><div class="field" style="position:absolute;left:1122px;top:352.8px;width:20px;height:21px;background:#c6ffc6;border-color:#a8c8a8;"></div><div class="t n" style="top:137.70px;left:1125.00px;">2</div><div class="t " style="top:165.20px;left:1125.00px;">L</div><div class="t " style="top:192.50px;left:1125.00px;">L</div><div class="t " style="top:247.90px;left:1125.00px;">L</div><div class="t " style="top:275.20px;left:1125.00px;">L</div><div class="field" style="position:absolute;left:1121.5px;top:380.5px;width:12px;height:12px;border-radius:2px;"></div><div class="field" style="position:absolute;left:1121.5px;top:401px;width:12px;height:12px;border-radius:2px;"></div><div class="" style="position:absolute;left:1005px;top:554px;width:121px;height:13px;background:linear-gradient(#fdfdfd,#f0f0f0);border-top:1px solid #cdcdcd;box-sizing:border-box;"></div><div class="" style="position:absolute;left:1017px;top:555px;width:1px;height:12px;background:#cfcfcf;"></div><svg class="abs" style="left:1009px;top:557.5px" width="4" height="7" viewBox="0 0 4 7"><path d="M4 0v7L0 3.5z" fill="#444"/></svg><div class="tabline" style="top:573px"></div><div class="t a" style="top:575.20px;left:1009.00px;">Rechnungsanschrift</div><div class="tabline" style="top:597.5px"></div><div class="t a" style="top:599.90px;left:1009.00px;">Rabatte</div><div class="tabline" style="top:622px"></div><div class="t a" style="top:624.70px;left:1009.00px;">Mehrwertsteuer</div><div class="tabline" style="top:646.5px"></div><div class="t a" style="top:649.40px;left:1009.00px;">Sonstiges</div></body></html>
